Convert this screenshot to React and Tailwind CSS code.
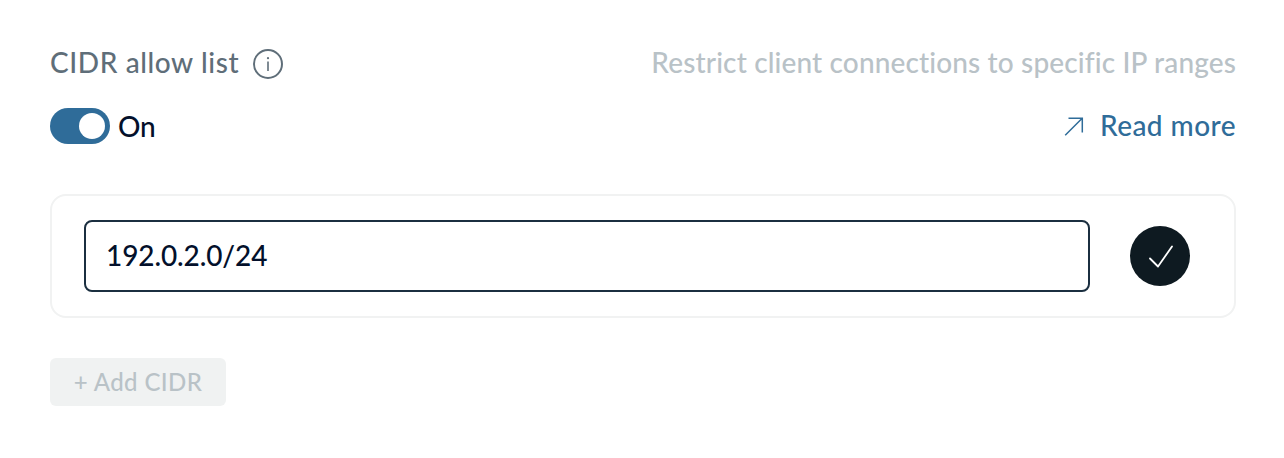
function InfoIcon() {
  return (
    <svg className="h-[30px] w-[30px]" viewBox="0 0 30 30" fill="none" stroke="#5f6e79" strokeWidth="2">
      <circle cx="15" cy="15" r="14" />
      <path d="M15 12.5v9.5" strokeWidth="1.6" />
      <circle cx="15" cy="9.2" r="1.1" fill="#5f6e79" stroke="none" />
    </svg>
  );
}

function ArrowIcon() {
  return (
    <svg className="h-5 w-5" viewBox="0 0 20 20" fill="none" stroke="#2f6c99" strokeWidth="1.5">
      <path d="M1.2 19.3L18.2 2.3M4.5 2.3H18.3V16.5" />
    </svg>
  );
}

function CheckIcon() {
  return (
    <svg className="h-[60px] w-[60px]" viewBox="0 0 60 60" fill="none" stroke="#fff" strokeWidth="1.8" strokeLinecap="round" strokeLinejoin="round">
      <path d="M20 32.5L28 40.5L42 20.5" />
    </svg>
  );
}

export default function App() {
  return (
    <main className="h-[458px] w-[1284px] bg-white pt-11 pr-12 pl-[50px] font-[Lato,sans-serif] text-[28px] leading-10 font-medium text-[#03102b]">
      <div className="flex h-10 items-center justify-between">
        <div className="flex items-center text-[#5f6e79]">
          <h2 className="w-[203px] pb-1 tracking-[0.6px] whitespace-nowrap">CIDR allow list</h2>
          <InfoIcon />
        </div>
        <p className="pb-1 tracking-[0.14px] whitespace-nowrap text-[#b9c2c7]">Restrict client connections to specific IP ranges</p>
      </div>
      <div className="mt-6 flex h-9 items-center justify-between">
        <div className="flex items-center gap-2">
          <button role="switch" aria-checked="true" aria-label="CIDR allow list" className="flex h-9 w-[60px] items-center justify-end rounded-full bg-[#2f6c99] pr-[5px]">
            <span className="h-[26px] w-[26px] rounded-full bg-white" />
          </button>
          <span className="-tracking-[0.2px]">On</span>
        </div>
        <a href="#" className="flex items-center gap-4 text-[#2f6c99]">
          <ArrowIcon />
          <span className="pb-0.5 tracking-[0.45px]">Read more</span>
        </a>
      </div>
      <section className="mt-[50px] flex h-[124px] w-[1186px] items-center rounded-2xl border-2 border-[#f1f2f2] pl-8">
        <div className="flex h-[72px] w-[1006px] items-center rounded-lg border-2 border-[#1b2f40] px-5">
          <span className="pb-0.5 -tracking-[0.1px]">192.0.2.0/24</span>
        </div>
        <button aria-label="Confirm" className="ml-10 h-[60px] w-[60px] rounded-full bg-[#0e1a21]">
          <CheckIcon />
        </button>
      </section>
      <button disabled className="mt-10 flex h-12 w-44 items-center justify-center rounded-md bg-[#f0f2f2] text-2xl tracking-[0.4px] whitespace-nowrap text-[#b9c2c7]">+ Add CIDR</button>
    </main>
  );
}
